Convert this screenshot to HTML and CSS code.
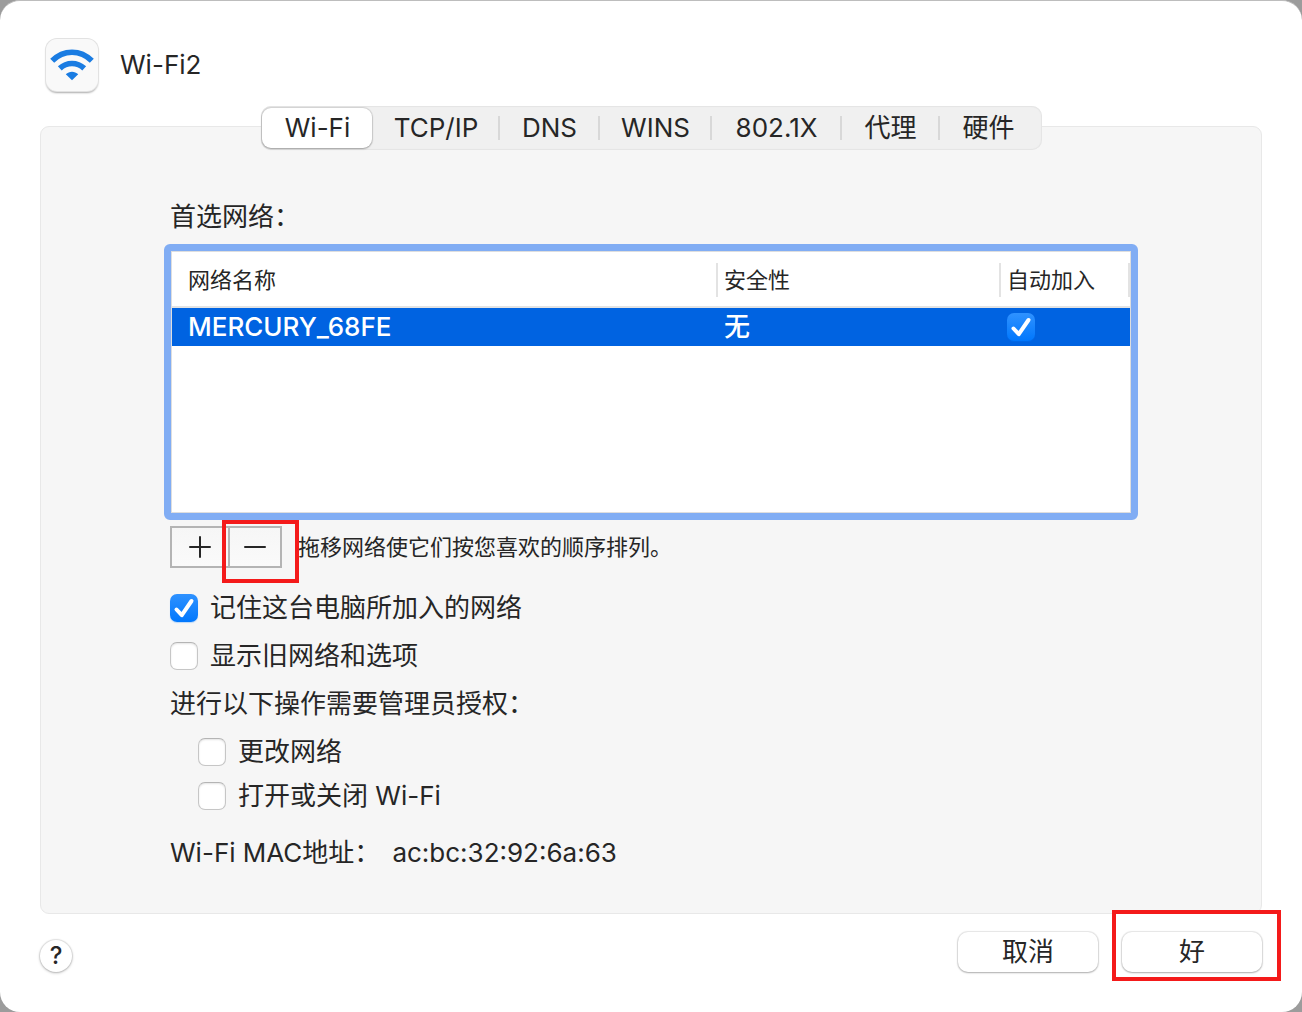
FILE: index.html
```html
<!DOCTYPE html>
<html lang="zh-CN">
<head>
<meta charset="utf-8">
<meta name="viewport" content="width=device-width, initial-scale=1">
<title>Wi-Fi2</title>
<link rel="stylesheet" href="styles.css">
</head>
<body>
<main class="sheet">
  <header class="service">
    <span class="service-icon">
      <svg viewBox="0 0 52 52" width="52" height="52" aria-hidden="true">
        <g fill="none" stroke="#1a7ce2" stroke-width="5.6">
          <path d="M6.2 21.8C17.5 10.4 34.5 10.4 45.8 21.8"/>
          <path d="M13.8 29.4C20.8 22.8 31.2 22.8 38.2 29.4"/>
        </g>
        <path d="M26 41.2L19.8 35.2C23.3 31.8 28.7 31.8 32.2 35.2Z" fill="#1a7ce2"/>
      </svg>
    </span>
    <h1 class="service-name">Wi-Fi2</h1>
  </header>

  <div class="tabs" role="tablist">
    <button class="tab tab-selected" type="button" role="tab" aria-selected="true">Wi-Fi</button>
    <button class="tab" type="button" role="tab">TCP/IP</button>
    <button class="tab" type="button" role="tab">DNS</button>
    <button class="tab" type="button" role="tab">WINS</button>
    <button class="tab" type="button" role="tab">802.1X</button>
    <button class="tab" type="button" role="tab">代理</button>
    <button class="tab" type="button" role="tab">硬件</button>
  </div>

  <section class="panel" role="tabpanel">
    <h2 class="line" id="preferred">首选网络：</h2>
    <div class="network-list">
      <table class="networks" aria-labelledby="preferred">
        <colgroup><col class="col-name"><col class="col-security"><col class="col-auto"></colgroup>
        <thead>
          <tr>
            <th scope="col"><span class="head">网络名称</span></th>
            <th scope="col"><span class="head">安全性</span></th>
            <th scope="col"><span class="head">自动加入</span></th>
          </tr>
        </thead>
        <tbody>
          <tr>
            <td>MERCURY_68FE</td>
            <td>无</td>
            <td>
              <span class="check">
                <input type="checkbox" aria-label="自动加入" checked>
                <svg class="tick" viewBox="0 0 28 28" aria-hidden="true"><path d="M6.5 15.5L11.8 21.2L21.5 7"/></svg>
              </span>
            </td>
          </tr>
        </tbody>
      </table>
    </div>

    <div class="list-tools">
      <div class="segments">
        <button class="segment segment-add" type="button" aria-label="添加">
          <svg viewBox="0 0 22 22" width="22" height="22" aria-hidden="true"><path d="M11 1V21M1 11H21"/></svg>
        </button>
        <span class="marked">
          <button class="segment" type="button" aria-label="移除">
            <svg viewBox="0 0 22 22" width="22" height="22" aria-hidden="true"><path d="M1 11H21"/></svg>
          </button>
          <span class="mark mark-remove"></span>
        </span>
      </div>
      <p class="hint">拖移网络使它们按您喜欢的顺序排列。</p>
    </div>

    <div class="options">
      <label class="line option">
        <span class="check">
          <input type="checkbox" checked>
          <svg class="tick" viewBox="0 0 28 28" aria-hidden="true"><path d="M6.5 15.5L11.8 21.2L21.5 7"/></svg>
        </span>
        记住这台电脑所加入的网络
      </label>
      <label class="line option"><span class="check"><input type="checkbox"></span>显示旧网络和选项</label>
      <p class="line" id="admin">进行以下操作需要管理员授权：</p>
      <div class="suboptions" role="group" aria-labelledby="admin">
        <label class="line option"><span class="check"><input type="checkbox"></span>更改网络</label>
        <label class="line option"><span class="check"><input type="checkbox"></span>打开或关闭 Wi-Fi</label>
      </div>
    </div>

    <dl class="line address">
      <dt>Wi-Fi MAC地址：</dt>
      <dd>ac:bc:32:92:6a:63</dd>
    </dl>
  </section>

  <footer class="footer">
    <button class="help" type="button" aria-label="帮助">?</button>
    <div class="actions">
      <button class="push" type="button">取消</button>
      <span class="marked">
        <button class="push" type="button">好</button>
        <span class="mark mark-confirm"></span>
      </span>
    </div>
  </footer>
</main>
</body>
</html>
```

FILE: styles.css
```css
* {
  box-sizing: border-box;
}

body {
  margin: 0;
  background: #9c9c9c;
  color: #262626;
  font-family: Inter, "Noto Sans CJK SC", sans-serif;
  font-size: 26px;
  line-height: 36px;
}

h1,
h2,
p,
dl,
dd {
  margin: 0;
  font-size: inherit;
  font-weight: 400;
}

button {
  padding: 0;
  border: 0;
  color: inherit;
  font: inherit;
}

.sheet {
  display: flex;
  flex-direction: column;
  min-height: 100vh;
  padding: 38px 40px 40px;
  border-top: 1px solid #bdbdbd;
  border-radius: 20px;
  background: #fff;
}

/* Service header */
.service {
  display: flex;
  align-items: center;
  gap: 22px;
  padding-left: 6px;
}

.service-icon {
  display: flex;
  border-radius: 11px;
  background: #f9f9f9;
  box-shadow: 0 0 0 1px #e2e2e2, 0 2px 2px #00000055;
}

/* Tabs straddle the top edge of the panel */
.tabs {
  z-index: 1;
  display: grid;
  grid-template-columns: 112px 127px 100px 112px 130px 98px 98px;
  align-self: center;
  height: 44px;
  margin-top: 15px;
  padding-right: 4px;
  border-radius: 10px;
  background: #f0f0f0;
  box-shadow: inset 0 0 1px 1px #e4e4e4;
}

.tab {
  display: grid;
  grid-template-columns: 1fr 2px;
  align-items: center;
  height: 44px;
  padding-left: 2px;
  background: none;
}

.tab::after {
  height: 24px;
  background: #d8d8d8;
  content: "";
}

.tab:last-child::after {
  visibility: hidden;
}

.tab-selected {
  grid-template-columns: 1fr;
  height: 40px;
  margin: 2px 1px;
  border-radius: 9px;
  background: #fff;
  box-shadow: 0 0 1px 1px #0000001c, 0 1px 2px #00000040;
}

.tab-selected::after {
  display: none;
}

.panel {
  flex: 1;
  margin-top: -24px;
  padding: 72px 123px 40px;
  border: 1px solid #e8e8e8;
  border-radius: 9px;
  background: #f6f6f6;
}

.line {
  min-height: 36px;
}

h2.line {
  padding-left: 6px;
}

/* Network list */
.network-list {
  height: 276px;
  margin-top: 9px;
  padding: 0 1px;
  border: 7px solid #81adf4;
  border-radius: 6px;
  background: #fff;
  box-shadow: inset 0 0 0 1px #dedede;
}

.networks {
  width: 100%;
  border-collapse: separate;
  border-spacing: 0;
  table-layout: fixed;
}

.col-security {
  width: 283px;
}

.col-auto {
  width: 129px;
}

th {
  height: 57px;
  padding: 2px 0 0;
  border-bottom: 2px solid #e3e3e3;
  font-size: 22px;
  font-weight: 400;
  line-height: 34px;
  text-align: left;
}

.head {
  display: block;
  padding-left: 6px;
  border-right: 2px solid #e3e3e3;
}

td {
  height: 38px;
  padding: 0 0 0 6px;
  background: #0063e1;
  color: #fff;
  font-weight: 500;
}

th:first-child .head,
td:first-child {
  padding-left: 16px;
}

/* Check boxes */
.check {
  display: grid;
  width: 28px;
  height: 28px;
}

.check > * {
  grid-area: 1 / 1;
}

.check input {
  width: 28px;
  height: 28px;
  margin: 0;
  border: 1px solid #c6c6c6;
  border-top-color: #b4b4b4;
  border-radius: 7px;
  appearance: none;
  background: #fff;
  box-shadow: inset 0 1px 2px #0000001c;
}

.check input:checked {
  border: 0;
  background: linear-gradient(#2f92ff, #0077fd);
  box-shadow: 0 1px 1px #007aff40;
}

.tick {
  fill: none;
  pointer-events: none;
  stroke: #fff;
  stroke-linecap: round;
  stroke-linejoin: round;
  stroke-width: 4;
}

/* Add and remove */
.list-tools {
  display: flex;
  align-items: center;
  gap: 16px;
  margin-top: 6px;
  padding-left: 6px;
}

.segments {
  display: flex;
}

.segment {
  display: grid;
  place-items: center;
  width: 54px;
  height: 42px;
  border: 2px solid #b4b4b4;
  background: linear-gradient(#f6f6f6, #fafafa);
}

.segment-add {
  width: 60px;
  margin-right: -2px;
}

.segment svg {
  fill: none;
  stroke: #262626;
  stroke-linecap: round;
  stroke-width: 2;
}

.hint {
  font-size: 22px;
}

/* Red call-out frames */
.marked {
  position: relative;
}

.mark {
  position: absolute;
  border: 4px solid #f41a1a;
  pointer-events: none;
}

.mark-remove {
  inset: -6px -17px -15px -6px;
}

.mark-confirm {
  inset: -22px -19px -9px -10px;
}

/* Options */
.options {
  display: grid;
  gap: 12px;
  margin-top: 22px;
  padding-left: 6px;
}

.option {
  display: flex;
  align-items: center;
  gap: 12px;
}

.suboptions {
  display: grid;
  gap: 8px;
  padding-left: 28px;
}

.address {
  display: flex;
  gap: 12px;
  margin-top: 21px;
  padding-left: 6px;
}

/* Footer */
.footer {
  display: flex;
  align-items: end;
  justify-content: space-between;
  margin-top: 18px;
}

.help {
  width: 32px;
  height: 32px;
  border-radius: 50%;
  background: #fff;
  box-shadow: 0 0 1px 1px #00000018, 0 1px 3px #00000040;
  font-size: 24px;
  font-weight: 500;
  line-height: 32px;
}

.actions {
  display: flex;
  gap: 24px;
}

.push {
  display: block;
  width: 140px;
  height: 40px;
  border-radius: 10px;
  background: #fff;
  box-shadow: 0 0 1px 1px #00000018, 0 1px 2px #00000040;
}
```
